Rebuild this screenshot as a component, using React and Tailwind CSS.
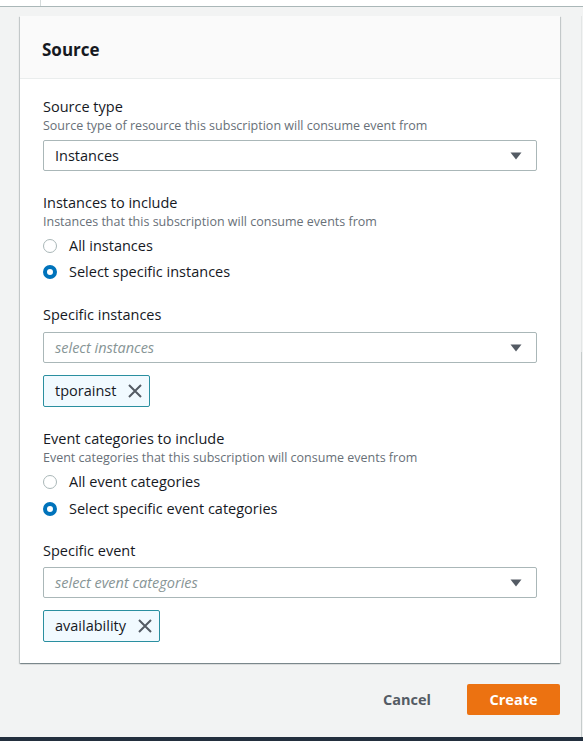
import React from "react";

const font = { fontFamily: '"Open Sans", "Noto Sans", Arial, sans-serif' };

function Caret() {
  return (
    <svg width="12" height="8" viewBox="0 0 12 8" className="shrink-0">
      <path d="M0.5 0.5 L11.5 0.5 L6 7.5 Z" fill="#545b64" />
    </svg>
  );
}

function XIcon() {
  return (
    <svg width="16" height="16" viewBox="0 0 16 16" className="shrink-0">
      <path d="M2 2 L14 14 M14 2 L2 14" stroke="#545b64" strokeWidth="2" fill="none" />
    </svg>
  );
}

function Select({ value, placeholder }) {
  return (
    <div className="h-[31px] border border-[#aab7b8] rounded-[2px] bg-white flex items-center justify-between pl-[11px] pr-[14px]">
      {value ? (
        <span className="text-[14.5px] text-[#16191f]">{value}</span>
      ) : (
        <span className="text-[14.5px] italic text-[#879596]">{placeholder}</span>
      )}
      <Caret />
    </div>
  );
}

function Token({ label }) {
  return (
    <div className="self-start h-[32px] border border-[#2a8fa0] bg-[#f1faff] rounded-[2px] flex items-center pl-[11px] pr-[6px] gap-[11px]">
      <span className="text-[14.5px] text-[#16191f]">{label}</span>
      <XIcon />
    </div>
  );
}

function Radio({ checked, label }) {
  return (
    <div className="flex items-center h-[20px]">
      {checked ? (
        <span className="w-[14px] h-[14px] rounded-full border-[4.5px] border-[#0073bb] bg-white box-border" />
      ) : (
        <span className="w-[14px] h-[14px] rounded-full border border-[#aab7b8] bg-white box-border" />
      )}
      <span className="ml-[12px] text-[14.5px] text-[#16191f]">{label}</span>
    </div>
  );
}

function Label({ title, desc }) {
  return (
    <div className="flex flex-col">
      <span className="text-[14.5px] leading-[20px] text-[#16191f]">{title}</span>
      {desc && <span className="text-[12.5px] leading-[17px] text-[#687078]">{desc}</span>}
    </div>
  );
}

export default function App() {
  return (
    <div style={font} className="relative w-full h-[741px] bg-[#f2f3f3] flex flex-col overflow-hidden">
      <div className="h-[7px] bg-white border-b border-[#aab7b8] flex shrink-0">
        <div className="w-[41px] border-r border-[#d5dbdb]" />
      </div>

      <div className="flex-1 flex flex-col pl-[20px] pr-[23px] pt-[9px]">
        <div className="bg-white shadow-[0_1px_1px_0_rgba(0,28,36,0.3),1px_1px_1px_0_rgba(0,28,36,0.15),-1px_1px_1px_0_rgba(0,28,36,0.15)]">
          <div className="h-[63px] bg-[#fafafa] border-b border-[#eaeded] pl-[22px] pr-[23px] pt-[5px] flex items-center">
            <span className="text-[17px] font-bold text-[#16191f]">Source</span>
          </div>

          <div className="px-[23px] pt-[18px] pb-[21px] flex flex-col">
            <Label title="Source type" desc="Source type of resource this subscription will consume event from" />
            <div className="mt-[6px]">
              <Select value="Instances" />
            </div>

            <div className="mt-[22px]">
              <Label title="Instances to include" desc="Instances that this subscription will consume events from" />
            </div>
            <div className="mt-[6px] flex flex-col gap-[6px]">
              <Radio label="All instances" />
              <Radio checked label="Select specific instances" />
            </div>

            <div className="mt-[23px]">
              <Label title="Specific instances" />
            </div>
            <div className="mt-[7px]">
              <Select placeholder="select instances" />
            </div>
            <div className="mt-[12px] flex">
              <Token label="tporainst" />
            </div>

            <div className="mt-[22px]">
              <Label title="Event categories to include" desc="Event categories that this subscription will consume events from" />
            </div>
            <div className="mt-[6px] flex flex-col gap-[7px]">
              <Radio label="All event categories" />
              <Radio checked label="Select specific event categories" />
            </div>

            <div className="mt-[22px]">
              <Label title="Specific event" />
            </div>
            <div className="mt-[6px]">
              <Select placeholder="select event categories" />
            </div>
            <div className="mt-[12px] flex">
              <Token label="availability" />
            </div>
          </div>
        </div>

        <div className="mt-[21px] flex justify-end items-center">
          <button className="h-[31px] px-[20px] text-[14.5px] font-bold text-[#545b64]">Cancel</button>
          <button className="ml-[16px] h-[31px] w-[93px] rounded-[2px] bg-[#ec7211] text-[14.5px] font-bold text-white">
            Create
          </button>
        </div>
      </div>

      <div className="h-[4px] bg-[#232f3e] shrink-0" />

      <div className="absolute right-[1px] top-[16px] bottom-[4px] w-px bg-[#e3e6e6]" />
      <div className="absolute right-[1px] top-[352px] bottom-[4px] w-px bg-[#c6cccc]" />
    </div>
  );
}
